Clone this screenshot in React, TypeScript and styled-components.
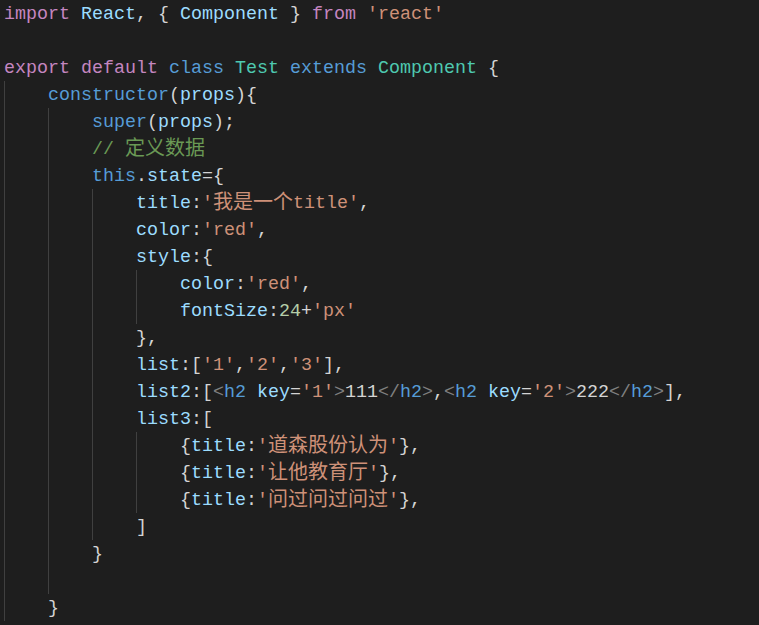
import React from 'react';
import styled, { createGlobalStyle } from 'styled-components';

const Global = createGlobalStyle`
  html, body {
    margin: 0;
    padding: 0;
    background: #1e1e1e;
  }
`;

const C = {
  kw: '#c586c0',
  st: '#569cd6',
  ty: '#4ec9b0',
  va: '#9cdcfe',
  str: '#ce9178',
  p: '#d4d4d4',
  cm: '#6a9955',
  num: '#b5cea8',
  tag: '#808080',
};

const Editor = styled.div`
  background: #1e1e1e;
  width: 759px;
  height: 625px;
  overflow: hidden;
  font-family: 'Liberation Mono', 'Noto Sans CJK SC', monospace;
  font-size: 18.333px;
  color: #d4d4d4;
  padding: 0 0 0 4px;
  box-sizing: border-box;
`;

const Line = styled.div`
  height: 27px;
  line-height: 27px;
  white-space: pre;
  display: flex;
  align-items: stretch;
`;

const Indent = styled.span`
  display: inline-block;
  width: 44px;
  flex: none;
  box-shadow: inset 1px 0 0 #404040;
`;

const Code = styled.span`
  display: inline-block;
  line-height: 27px;
  padding-top: 1px;
  height: 26px;
`;

const Tok = styled.span<{ $c: string }>`
  color: ${(p) => p.$c};
`;

const Cjk = styled.span`
  font-family: 'Noto Sans CJK SC', sans-serif;
  font-size: 20px;
  line-height: 1;
  vertical-align: -1px;
`;

type T = [string, string];
type L = { i: number; t: T[] };

const lines: L[] = [
  { i: 0, t: [['import', C.kw], [' ', C.p], ['React', C.va], [', { ', C.p], ['Component', C.va], [' } ', C.p], ['from', C.kw], [' ', C.p], ["'react'", C.str]] },
  { i: 0, t: [] },
  { i: 0, t: [['export', C.kw], [' ', C.p], ['default', C.kw], [' ', C.p], ['class', C.st], [' ', C.p], ['Test', C.ty], [' ', C.p], ['extends', C.st], [' ', C.p], ['Component', C.ty], [' {', C.p]] },
  { i: 1, t: [['constructor', C.st], ['(', C.p], ['props', C.va], ['){', C.p]] },
  { i: 2, t: [['super', C.st], ['(', C.p], ['props', C.va], [');', C.p]] },
  { i: 2, t: [['// 定义数据', C.cm]] },
  { i: 2, t: [['this', C.st], ['.', C.p], ['state', C.va], ['={', C.p]] },
  { i: 3, t: [['title', C.va], [':', C.p], ["'我是一个title'", C.str], [',', C.p]] },
  { i: 3, t: [['color', C.va], [':', C.p], ["'red'", C.str], [',', C.p]] },
  { i: 3, t: [['style', C.va], [':{', C.p]] },
  { i: 4, t: [['color', C.va], [':', C.p], ["'red'", C.str], [',', C.p]] },
  { i: 4, t: [['fontSize', C.va], [':', C.p], ['24', C.num], ['+', C.p], ["'px'", C.str]] },
  { i: 3, t: [['},', C.p]] },
  { i: 3, t: [['list', C.va], [':[', C.p], ["'1'", C.str], [',', C.p], ["'2'", C.str], [',', C.p], ["'3'", C.str], ['],', C.p]] },
  {
    i: 3,
    t: [
      ['list2', C.va], [':[', C.p],
      ['<', C.tag], ['h2', C.st], [' ', C.p], ['key', C.va], ['=', C.p], ["'1'", C.str], ['>', C.tag], ['111', C.p], ['</', C.tag], ['h2', C.st], ['>', C.tag],
      [',', C.p],
      ['<', C.tag], ['h2', C.st], [' ', C.p], ['key', C.va], ['=', C.p], ["'2'", C.str], ['>', C.tag], ['222', C.p], ['</', C.tag], ['h2', C.st], ['>', C.tag],
      ['],', C.p],
    ],
  },
  { i: 3, t: [['list3', C.va], [':[', C.p]] },
  { i: 4, t: [['{', C.p], ['title', C.va], [':', C.p], ["'道森股份认为'", C.str], ['},', C.p]] },
  { i: 4, t: [['{', C.p], ['title', C.va], [':', C.p], ["'让他教育厅'", C.str], ['},', C.p]] },
  { i: 4, t: [['{', C.p], ['title', C.va], [':', C.p], ["'问过问过问过'", C.str], ['},', C.p]] },
  { i: 3, t: [[']', C.p]] },
  { i: 2, t: [['}', C.p]] },
  { i: 2, t: [] },
  { i: 1, t: [['}', C.p]] },
];

const renderText = (s: string) =>
  s.split(/([\u4e00-\u9fff]+)/).map((part, k) =>
    /[\u4e00-\u9fff]/.test(part) ? <Cjk key={k}>{part}</Cjk> : part
  );

export default function App() {
  return (
    <>
      <Global />
      <Editor>
        {lines.map((ln, li) => (
          <Line key={li}>
            {Array.from({ length: ln.i }).map((_, k) => (
              <Indent key={k} />
            ))}
            <Code>
              {ln.t.map(([s, c], k) => (
                <Tok key={k} $c={c}>
                  {renderText(s)}
                </Tok>
              ))}
            </Code>
          </Line>
        ))}
      </Editor>
    </>
  );
}
